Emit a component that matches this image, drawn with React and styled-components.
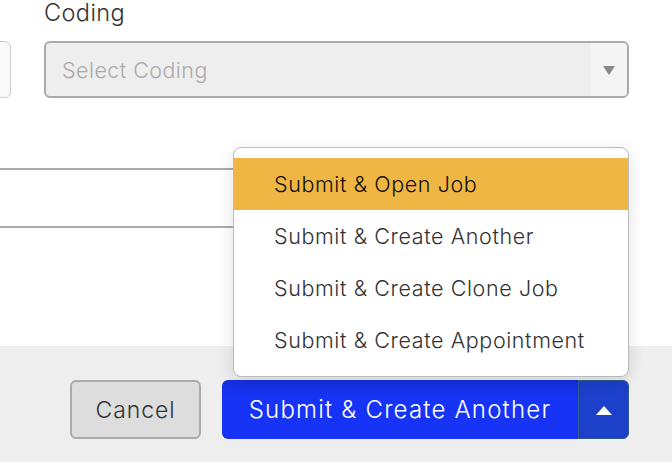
import React from "react";
import styled, { createGlobalStyle } from "styled-components";

const Global = createGlobalStyle`
  html, body { margin: 0; padding: 0; background: #fff; }
  body { font-family: Inter, "Open Sans", sans-serif; font-weight: 300; color: #333; overflow: hidden; }
  * { box-sizing: border-box; }
  button { font-weight: 300; }
`;

const Page = styled.div`
  width: 672px;
  height: 462px;
  display: flex;
  flex-direction: column;
  position: relative;
  overflow: hidden;
`;

const FormArea = styled.div`
  height: 346px;
  display: flex;
  flex-direction: column;
  padding-right: 43px;
`;

const FieldRow = styled.div`
  display: grid;
  grid-template-columns: 300px 1fr;
  column-gap: 33px;
  margin-left: -289px;
`;

const Field = styled.div`
  display: flex;
  flex-direction: column;
`;

const Label = styled.div`
  font-size: 23.5px;
  line-height: 25px;
  height: 41px;
  color: #333;
  letter-spacing: 0.4px;
`;

const TextBox = styled.div`
  height: 57px;
  border: 1.5px solid #ccc;
  border-radius: 6px;
  background: #fafafa;
`;

const Select = styled.div`
  height: 57px;
  border: 2px solid #aaa;
  border-radius: 6px;
  background: #eee;
  display: flex;
  align-items: center;
  overflow: hidden;
`;

const Placeholder = styled.div`
  flex: 1;
  padding-left: 16px;
  font-size: 21.5px;
  letter-spacing: 0.45px;
  color: #aaa;
`;

const ArrowCell = styled.div`
  width: 36px;
  height: 100%;
  background: #f4f4f4;
  display: flex;
  align-items: center;
  justify-content: center;
`;

const DownTri = styled.span`
  width: 0;
  height: 0;
  border-left: 6px solid transparent;
  border-right: 6px solid transparent;
  border-top: 9px solid #888;
  margin-top: 1px;
`;

const WideInput = styled.div`
  margin-top: 70px;
  margin-left: -40px;
  height: 60px;
  border: 2px solid #aaa;
  border-radius: 6px;
  background: #fff;
`;

const Footer = styled.div`
  flex: 1;
  background: #eee;
  display: flex;
  justify-content: flex-end;
  align-items: flex-start;
  padding: 34px 43px 0 0;
  gap: 21px;
`;

const CancelButton = styled.button`
  width: 131px;
  height: 59px;
  background: #ddd;
  border: 2px solid #aaa;
  border-radius: 6px;
  font-family: inherit;
  font-size: 23px;
  letter-spacing: 0.9px;
  color: #333;
  padding: 0;
`;

const SplitGroup = styled.div`
  display: flex;
  height: 59px;
  position: relative;
`;

const MainButton = styled.button`
  width: 356px;
  height: 59px;
  border: none;
  border-radius: 6px 0 0 6px;
  background: linear-gradient(#1530e0, #1733f5 30%);
  color: #fff;
  font-family: inherit;
  font-size: 24px;
  letter-spacing: 1.2px;
  padding: 0;
  text-align: center;
`;

const ToggleButton = styled.button`
  width: 51px;
  height: 59px;
  border: 1.5px solid #2e5a8c;
  border-radius: 0 6px 6px 0;
  background: #1c40c9;
  display: flex;
  align-items: center;
  justify-content: center;
  padding: 0;
`;

const UpTri = styled.span`
  width: 0;
  height: 0;
  border-left: 8px solid transparent;
  border-right: 8px solid transparent;
  border-bottom: 9px solid #fff;
  margin-left: 1px;
  margin-top: 2px;
`;

const Menu = styled.div`
  position: absolute;
  right: 0;
  bottom: 62px;
  width: 396px;
  background: #fff;
  border: 1.5px solid #bbb;
  border-radius: 8px;
  padding: 10px 0 10px;
  box-shadow: 0 4px 16px rgba(0, 0, 0, 0.12);
  display: flex;
  flex-direction: column;
`;

const MenuItem = styled.div`
  height: 52px;
  display: flex;
  align-items: center;
  padding-left: 40px;
  font-size: 21.5px;
  letter-spacing: 0.6px;
  color: ${(p) => (p.$active ? "#111" : "#333")};
  background: ${(p) => (p.$active ? "#efb643" : "transparent")};
`;

const items = [
  "Submit & Open Job",
  "Submit & Create Another",
  "Submit & Create Clone Job",
  "Submit & Create Appointment",
];

export default function App() {
  return (
    <Page>
      <Global />
      <FormArea>
        <FieldRow>
          <Field>
            <Label>&nbsp;</Label>
            <TextBox />
          </Field>
          <Field>
            <Label>Coding</Label>
            <Select>
              <Placeholder>Select Coding</Placeholder>
              <ArrowCell>
                <DownTri />
              </ArrowCell>
            </Select>
          </Field>
        </FieldRow>
        <WideInput />
      </FormArea>
      <Footer>
        <CancelButton>Cancel</CancelButton>
        <SplitGroup>
          <MainButton>Submit &amp; Create Another</MainButton>
          <ToggleButton>
            <UpTri />
          </ToggleButton>
          <Menu>
            {items.map((t, i) => (
              <MenuItem key={t} $active={i === 0}>
                {t}
              </MenuItem>
            ))}
          </Menu>
        </SplitGroup>
      </Footer>
    </Page>
  );
}
